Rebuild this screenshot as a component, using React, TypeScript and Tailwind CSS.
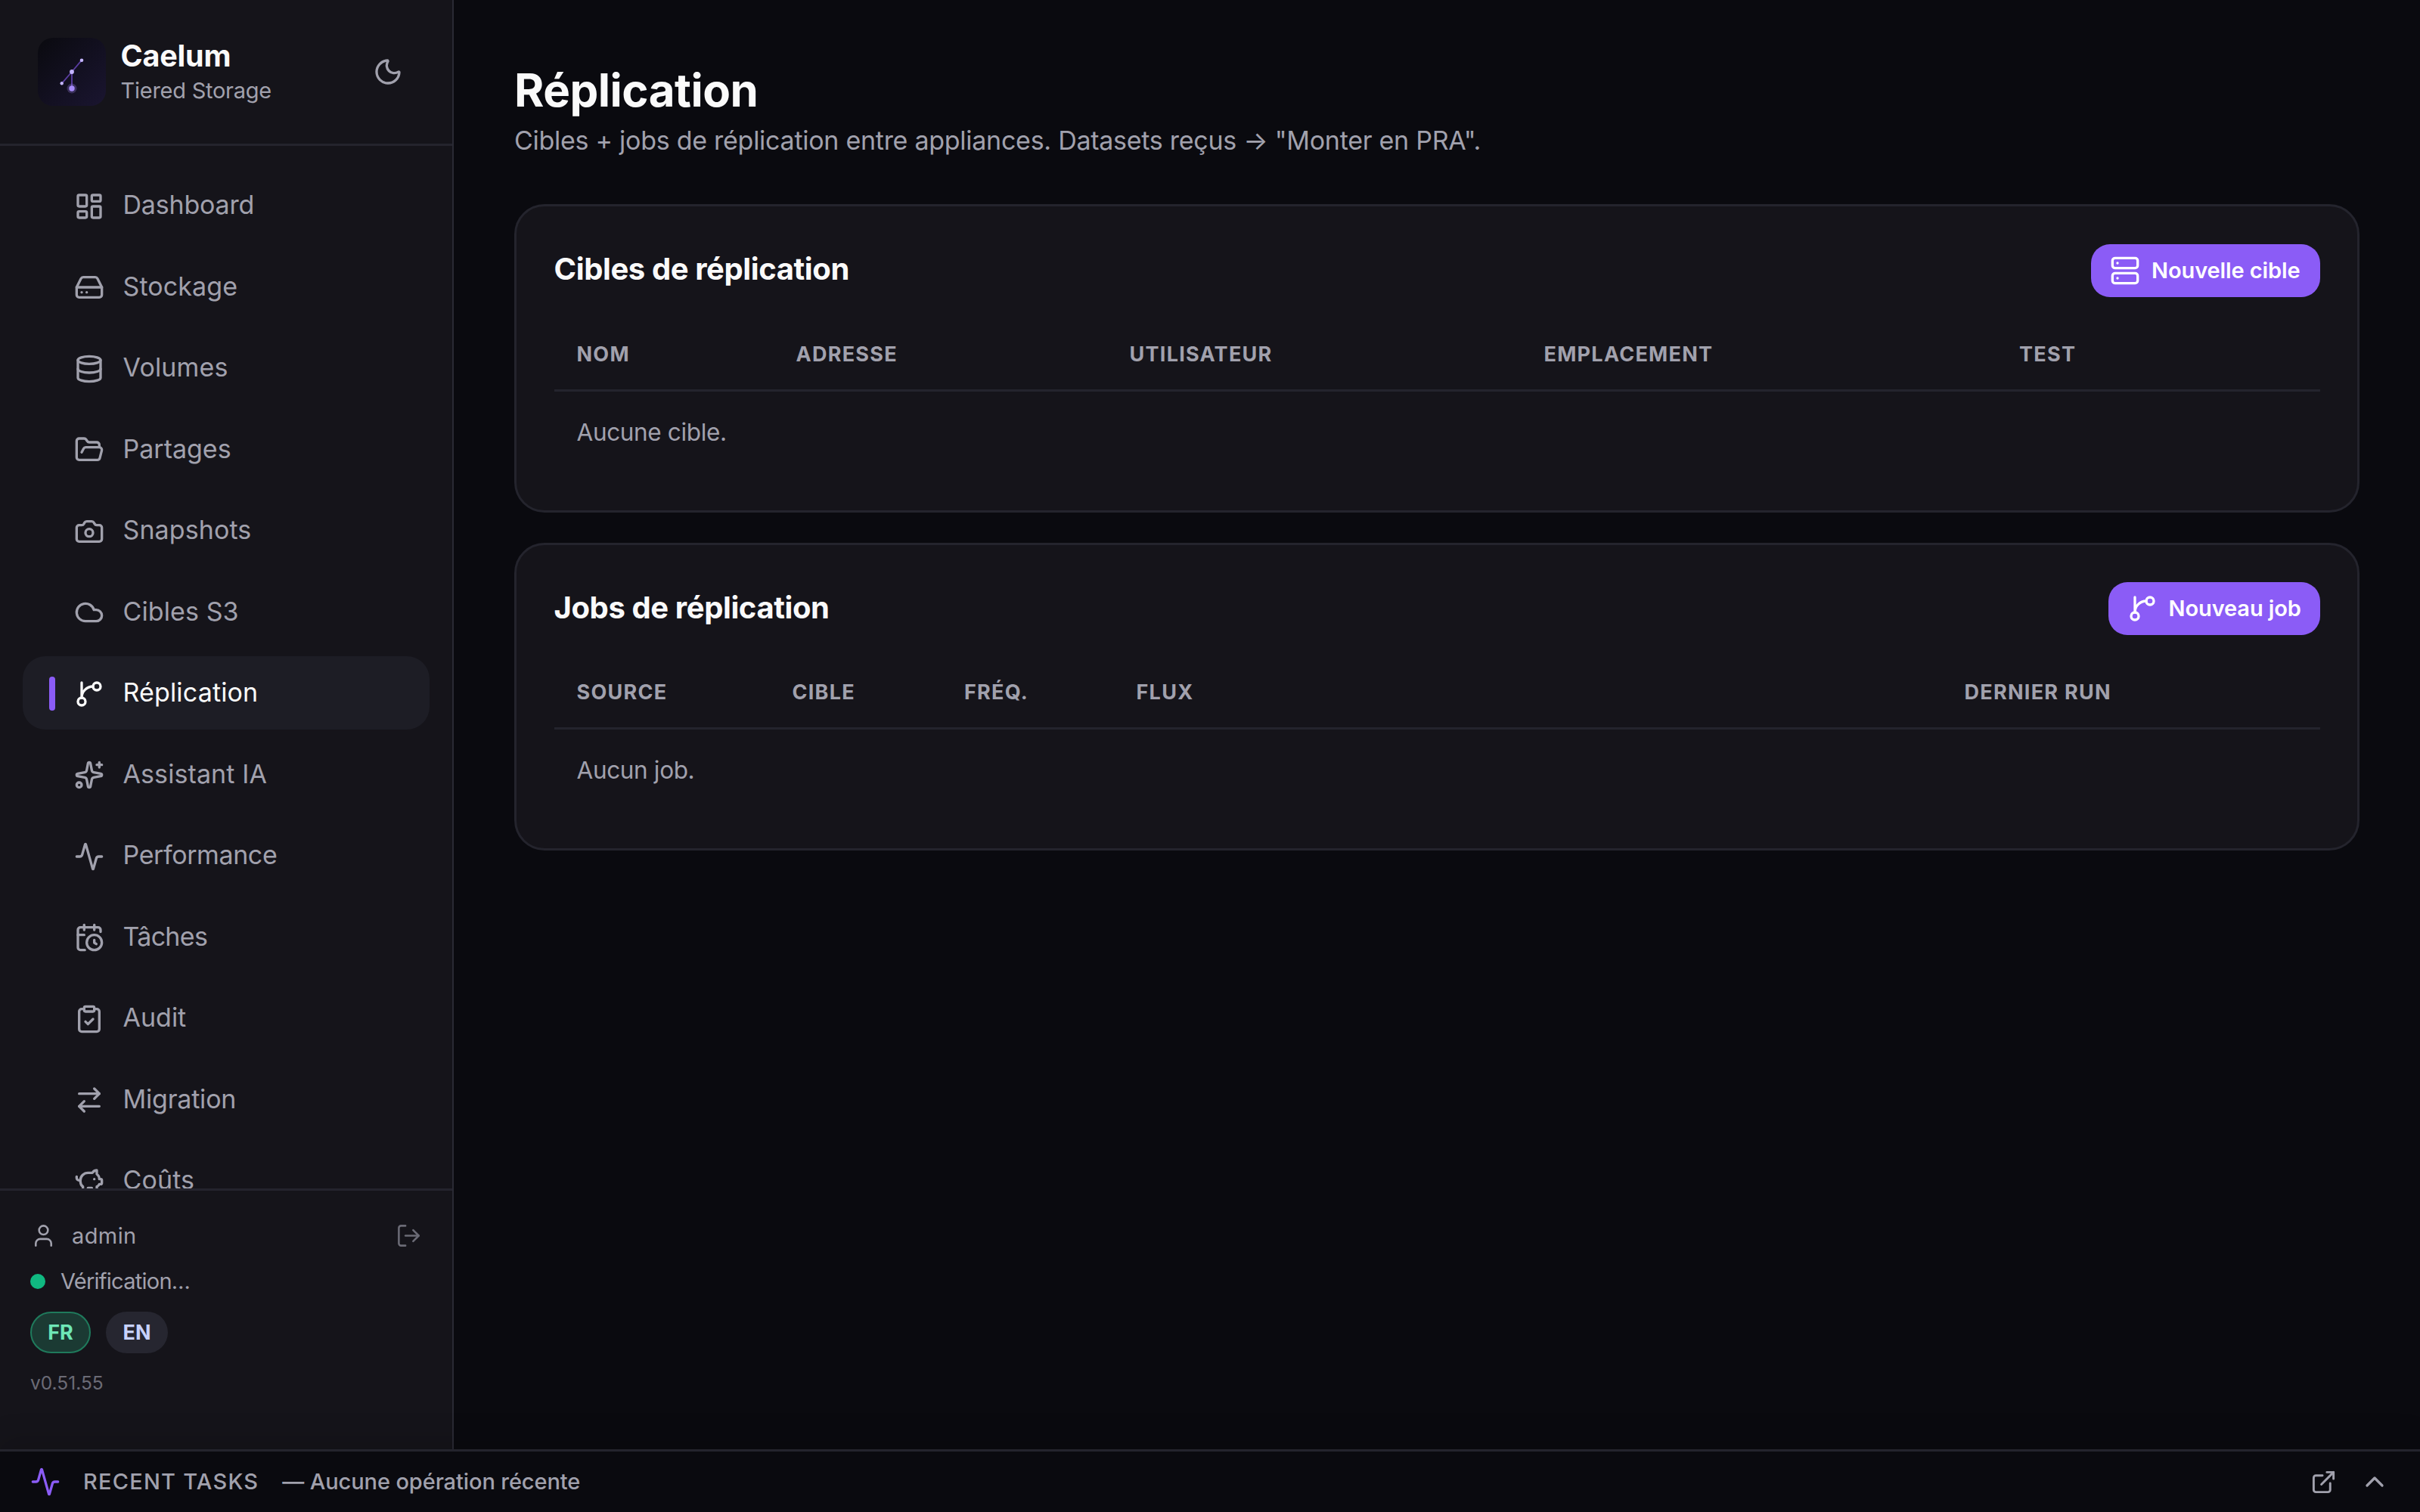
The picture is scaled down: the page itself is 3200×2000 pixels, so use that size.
import {
  Activity,
  ArrowRightLeft,
  CalendarClock,
  Camera,
  ChevronUp,
  ClipboardCheck,
  Cloud,
  Database,
  ExternalLink,
  FolderOpen,
  HardDrive,
  LayoutDashboard,
  LogOut,
  Moon,
  PiggyBank,
  Server,
  Sparkles,
  User,
} from "lucide-react";
import type { ComponentType } from "react";

type IconType = ComponentType<{ className?: string }>;

interface NavItem {
  label: string;
  icon: IconType;
  tracking: string;
}

interface Column {
  label: string;
  width: string;
}

interface ReplicationCardProps {
  title: string;
  action: string;
  actionClass: string;
  icon: IconType;
  columns: Column[];
  empty: string;
}

function BranchIcon({ className }: { className?: string }) {
  return (
    <svg
      viewBox="0 0 24 24"
      fill="none"
      stroke="currentColor"
      strokeWidth="2"
      strokeLinecap="round"
      strokeLinejoin="round"
      className={className}
    >
      <path d="M15 6a9 9 0 0 0-9 9V3" />
      <circle cx="18" cy="6" r="3" />
      <circle cx="6" cy="18" r="3" />
    </svg>
  );
}

const navItems: NavItem[] = [
  { label: "Dashboard", icon: LayoutDashboard, tracking: "tracking-[-0.2px]" },
  { label: "Stockage", icon: HardDrive, tracking: "tracking-[0.1px]" },
  { label: "Volumes", icon: Database, tracking: "tracking-[0.15px]" },
  { label: "Partages", icon: FolderOpen, tracking: "" },
  { label: "Snapshots", icon: Camera, tracking: "tracking-[0.1px]" },
  { label: "Cibles S3", icon: Cloud, tracking: "tracking-[0.1px]" },
  { label: "Réplication", icon: BranchIcon, tracking: "tracking-[0.15px]" },
  { label: "Assistant IA", icon: Sparkles, tracking: "tracking-[0.1px]" },
  { label: "Performance", icon: Activity, tracking: "tracking-[-0.4px]" },
  { label: "Tâches", icon: CalendarClock, tracking: "tracking-[-0.7px]" },
  { label: "Audit", icon: ClipboardCheck, tracking: "" },
  { label: "Migration", icon: ArrowRightLeft, tracking: "tracking-[-0.2px]" },
  { label: "Coûts", icon: PiggyBank, tracking: "tracking-[0.1px]" },
];

const targetColumns: Column[] = [
  { label: "Nom", width: "w-[290px]" },
  { label: "Adresse", width: "w-[441px]" },
  { label: "Utilisateur", width: "w-[548px]" },
  { label: "Emplacement", width: "w-[628.5px]" },
  { label: "Test", width: "w-[292px]" },
  { label: "", width: "w-[135.5px]" },
];

const jobColumns: Column[] = [
  { label: "Source", width: "w-[285px]" },
  { label: "Cible", width: "w-[227.5px]" },
  { label: "Fréq.", width: "w-[227.5px]" },
  { label: "Flux", width: "w-[1095px]" },
  { label: "Dernier run", width: "w-[405px]" },
  { label: "", width: "w-[95px]" },
];

function Logo() {
  return (
    <svg viewBox="0 0 90 90" className="size-[90px] shrink-0">
      <defs>
        <linearGradient id="logo-bg" x1="0" y1="0" x2="1" y2="1">
          <stop offset="0" stopColor="#0a0a0f" />
          <stop offset="1" stopColor="#1a1530" />
        </linearGradient>
      </defs>
      <rect width="90" height="90" rx="20" fill="url(#logo-bg)" />
      <path
        d="M58 29.7 45 45 31.7 60.3M45 45V67"
        stroke="#8b5cf6"
        strokeOpacity="0.6"
        strokeWidth="1.8"
        fill="none"
      />
      <circle cx="58" cy="29.7" r="2.3" fill="#c4b5fd" />
      <circle cx="45" cy="45" r="2.9" fill="#c4b5fd" />
      <circle cx="31.7" cy="60.3" r="2.2" fill="#c4b5fd" />
      <circle cx="45" cy="67" r="6.5" fill="#a78bfa" fillOpacity="0.25" />
      <circle cx="45" cy="67" r="3.7" fill="#a78bfa" />
    </svg>
  );
}

function Sidebar() {
  return (
    <aside className="flex w-[600px] shrink-0 flex-col border-r-2 border-[#2a2a34] bg-[#15141a]">
      <div className="flex h-[193px] shrink-0 items-center border-b-3 border-[#24242d] pl-[50px] pr-[65px]">
        <Logo />
        <div className="ml-[19.5px] flex-1">
          <div className="pt-0.5 text-[39.5px] leading-[46px] font-bold tracking-[-0.2px] text-[#fafafa]">
            Caelum
          </div>
          <div className="pt-px text-[29px] leading-[43px] tracking-[-0.25px] text-[#a1a1ad]">
            Tiered Storage
          </div>
        </div>
        <Moon className="size-10 text-[#a1a1ad]" />
      </div>

      <nav className="flex min-h-0 flex-1 flex-col gap-[10px] overflow-hidden px-[30px] pt-[29.5px]">
        {navItems.map(({ label, icon: Icon, tracking }) => {
          const active = label === "Réplication";
          return (
            <a
              key={label}
              className={`flex h-[97.5px] shrink-0 items-center gap-[25px] rounded-[30px] px-[35px] text-[34px] ${
                active ? "bg-[#1d1d25] text-[#fafafa]" : "text-[#a1a1ad]"
              }`}
            >
              <span
                className={`mt-[3px] h-[45px] w-[7.5px] rounded-full ${
                  active ? "bg-[#8b5cf6]" : ""
                }`}
              />
              <Icon className="mt-[3px] size-10 shrink-0" />
              <span className={`-mt-px ${tracking}`}>{label}</span>
            </a>
          );
        })}
      </nav>

      {/* Compte, état et langue */}
      <div className="h-[345px] shrink-0 border-t-3 border-[#24242d] px-10 pt-[37px] text-[29px] text-[#a1a1ad]">
        <div className="flex h-[45px] items-center">
          <User className="size-[35px]" strokeWidth={1.75} />
          <span className="ml-5 flex-1 tracking-[0.4px]">admin</span>
          <LogOut className="size-[35px] text-[#6b6b76]" strokeWidth={1.75} />
        </div>
        <div className="mt-[15px] flex h-[45px] items-center gap-5">
          <span className="size-5 rounded-full bg-[#10b981]" />
          <span className="tracking-[-0.75px]">Vérification…</span>
        </div>
        <div className="mt-[18px] flex gap-5 text-[27px] font-bold">
          <span className="flex h-[55px] w-20 items-center justify-center rounded-full border-2 border-[#1f7a5c] bg-[#1b3a33] pt-0.5 text-[#6ee7b7]">
            FR
          </span>
          <span className="flex h-[55px] w-[82px] items-center justify-center rounded-full bg-[#262630] pt-0.5 text-[#c7d2fe]">
            EN
          </span>
        </div>
        <div className="mt-[20px] text-[24.5px] leading-[38px] text-[#6b6b76]">
          v0.51.55
        </div>
      </div>
    </aside>
  );
}

function ReplicationCard({
  title,
  action,
  actionClass,
  icon: Icon,
  columns,
  empty,
}: ReplicationCardProps) {
  return (
    <section className="h-[407.5px] rounded-[40px] border-3 border-[#24242d] bg-[#15141a] px-[49.5px] pt-[49.5px]">
      <div className="flex h-[70px] items-center justify-between">
        <h2 className="-mt-[3px] text-[40px] font-bold tracking-[-0.4px] text-[#fafafa]">
          {title}
        </h2>
        <button
          className={`flex h-[70px] items-center gap-[15px] rounded-[25px] bg-[#8b5cf6] px-[25px] text-[29px] font-semibold whitespace-nowrap text-white ${actionClass}`}
        >
          <Icon className="size-10 shrink-0" />
          <span className="tracking-[-0.1px]">{action}</span>
        </button>
      </div>
      <table className="mt-[30px] w-full table-fixed border-separate border-spacing-0 text-left">
        <thead>
          <tr className="h-[95px] text-[27px] tracking-[0.047em] text-[#a1a1ad] uppercase">
            {columns.map((column, index) => (
              <th
                key={index}
                className={`border-b-3 border-[#24242d] pt-px pb-0 pl-[30px] font-bold ${column.width}`}
              >
                {column.label}
              </th>
            ))}
          </tr>
        </thead>
        <tbody>
          <tr className="h-[106px]">
            <td
              colSpan={columns.length}
              className="pt-0.5 pl-[30px] text-[31.5px] tracking-[-0.35px] text-[#a1a1ad]"
            >
              {empty}
            </td>
          </tr>
        </tbody>
      </table>
    </section>
  );
}

function TaskBar() {
  return (
    <footer className="relative flex h-[83px] shrink-0 items-center border-t-3 border-[#24242d] bg-[#0a0a0f] px-10 text-[29px] font-medium text-[#a1a1ad] shadow-[0_-10px_40px_rgba(0,0,0,0.15)]">
      <Activity className="size-10 text-[#8b5cf6]" />
      <span className="ml-[30px] tracking-[0.042em]">RECENT TASKS</span>
      <span className="ml-[31px] flex-1 tracking-[-0.1px]">
        — Aucune opération récente
      </span>
      <ExternalLink className="size-[35px]" />
      <ChevronUp className="ml-[30px] size-10" />
    </footer>
  );
}

export default function App() {
  return (
    <div className="flex h-[2000px] w-[3200px] flex-col overflow-hidden bg-[#0a0a0f] font-[Inter,sans-serif]">
      <div className="flex min-h-0 flex-1">
        <Sidebar />
        <main className="flex-1 px-20 pt-[80px]">
          <h1 className="text-[60px] leading-[78px] font-bold tracking-[-0.5px] text-[#fafafa]">
            Réplication
          </h1>
          <p className="pt-px text-[34px] leading-[54px] tracking-[-0.27px] text-[#a1a1ad]">
            Cibles + jobs de réplication entre appliances. Datasets reçus →
            "Monter en PRA".
          </p>
          <div className="mt-[57px] flex flex-col gap-10">
            <ReplicationCard
              title="Cibles de réplication"
              action="Nouvelle cible"
              actionClass="w-[302.5px]"
              icon={Server}
              columns={targetColumns}
              empty="Aucune cible."
            />
            <ReplicationCard
              title="Jobs de réplication"
              action="Nouveau job"
              actionClass="w-[280px]"
              icon={BranchIcon}
              columns={jobColumns}
              empty="Aucun job."
            />
          </div>
        </main>
      </div>
      <TaskBar />
    </div>
  );
}
